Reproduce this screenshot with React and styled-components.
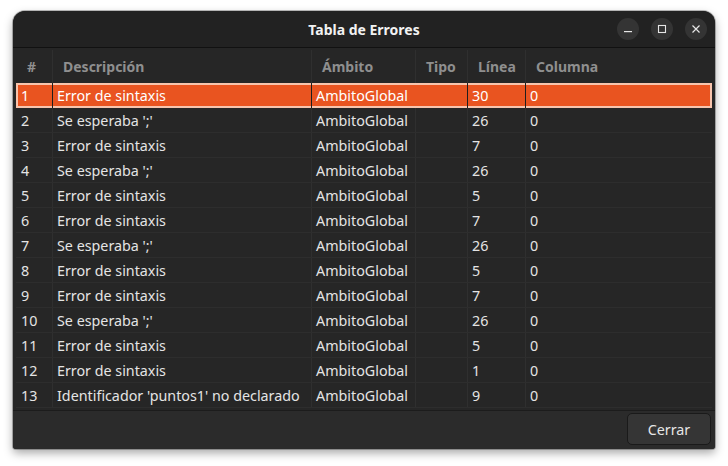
import React from "react";
import styled, { createGlobalStyle } from "styled-components";

const GlobalStyle = createGlobalStyle`
  html, body { margin: 0; padding: 0; background: #ffffff; }
  body { font-family: "Noto Sans", "Open Sans", sans-serif; }
  * { box-sizing: border-box; }
`;

const Page = styled.div`
  width: 728px;
  height: 466px;
  padding: 11px 13px 0 13px;
`;

const Window = styled.div`
  width: 702px;
  height: 438px;
  border-radius: 12px 12px 3px 3px;
  background: #2a2a2a;
  box-shadow: 0 4px 10px rgba(0, 0, 0, 0.35), 0 0 0 1px rgba(0, 0, 0, 0.25);
  display: flex;
  flex-direction: column;
  overflow: hidden;
`;

const TitleBar = styled.div`
  height: 37px;
  flex: none;
  background: #222222;
  border-bottom: 1px solid #111111;
  display: grid;
  grid-template-columns: 1fr auto 1fr;
  align-items: center;
`;

const Title = styled.div`
  grid-column: 2;
  color: #f2f2f2;
  font-weight: 700;
  font-size: 14px;
`;

const Controls = styled.div`
  grid-column: 3;
  justify-self: end;
  display: flex;
  gap: 12px;
  padding-right: 8px;
`;

const CtrlButton = styled.div`
  width: 22px;
  height: 22px;
  border-radius: 50%;
  background: #343434;
  display: flex;
  align-items: center;
  justify-content: center;
  color: #e6e6e6;
`;

const TableArea = styled.div`
  flex: 1;
  padding: 0 3px;
  background: #262626;
  border-bottom: 1px solid #1c1c1c;
`;

const cols = "36px 259px 104px 52px 58px 1fr";

const HeaderRow = styled.div`
  display: grid;
  grid-template-columns: ${cols};
  height: 35px;
  padding-top: 2px;
`;

const HeadCell = styled.div`
  display: flex;
  align-items: center;
  padding-left: ${(p) => (p.$first ? "11px" : "10px")};
  color: #8f8f8f;
  font-weight: 700;
  font-size: 14px;
  border-left: ${(p) => (p.$first ? "none" : "1px solid #2f2f2f")};
`;

const Row = styled.div`
  display: grid;
  grid-template-columns: ${cols};
  height: 25px;
  background: ${(p) => (p.$selected ? "#e95420" : "transparent")};
  box-shadow: ${(p) => (p.$selected ? "inset 0 0 0 2px #f7c4ad" : "none")};
  border-bottom: ${(p) => (p.$selected ? "none" : "1px solid #2d2d2d")};
  color: ${(p) => (p.$selected ? "#ffffff" : "#e4e4e4")};
`;

const Cell = styled.div`
  display: flex;
  align-items: center;
  padding-left: ${(p) => (p.$first ? "5px" : "4px")};
  font-size: 14.3px;
  white-space: nowrap;
  overflow: hidden;
  border-left: ${(p) =>
    p.$first
      ? "none"
      : p.$noLine
      ? "1px solid transparent"
      : p.$selected
      ? "1px solid #1e1e1e"
      : "1px solid #2f2f2f"};
`;

const Footer = styled.div`
  height: 38px;
  flex: none;
  background: #2b2b2b;
  display: flex;
  justify-content: flex-end;
  padding: 2px 4px 0 0;
`;

const Button = styled.button`
  width: 84px;
  height: 32px;
  border-radius: 5px;
  border: 1px solid #1a1a1a;
  background: #353535;
  color: #e6e6e6;
  font-family: "Noto Sans", "Open Sans", sans-serif;
  font-size: 14.3px;
`;

const errors = [
  ["1", "Error de sintaxis", "AmbitoGlobal", "", "30", "0"],
  ["2", "Se esperaba ';'", "AmbitoGlobal", "", "26", "0"],
  ["3", "Error de sintaxis", "AmbitoGlobal", "", "7", "0"],
  ["4", "Se esperaba ';'", "AmbitoGlobal", "", "26", "0"],
  ["5", "Error de sintaxis", "AmbitoGlobal", "", "5", "0"],
  ["6", "Error de sintaxis", "AmbitoGlobal", "", "7", "0"],
  ["7", "Se esperaba ';'", "AmbitoGlobal", "", "26", "0"],
  ["8", "Error de sintaxis", "AmbitoGlobal", "", "5", "0"],
  ["9", "Error de sintaxis", "AmbitoGlobal", "", "7", "0"],
  ["10", "Se esperaba ';'", "AmbitoGlobal", "", "26", "0"],
  ["11", "Error de sintaxis", "AmbitoGlobal", "", "5", "0"],
  ["12", "Error de sintaxis", "AmbitoGlobal", "", "1", "0"],
  ["13", "Identificador 'puntos1' no declarado", "AmbitoGlobal", "", "9", "0"],
];

const headers = ["#", "Descripción", "Ámbito", "Tipo", "Línea", "Columna"];

export default function App() {
  return (
    <>
      <GlobalStyle />
      <Page>
        <Window>
          <TitleBar>
            <Title>Tabla de Errores</Title>
            <Controls>
              <CtrlButton>
                <svg width="10" height="10" viewBox="0 0 10 10">
                  <rect x="1" y="7" width="8" height="1.2" fill="currentColor" />
                </svg>
              </CtrlButton>
              <CtrlButton>
                <svg width="10" height="10" viewBox="0 0 10 10">
                  <rect x="1.5" y="1.5" width="7" height="7" fill="none" stroke="currentColor" strokeWidth="1.1" />
                </svg>
              </CtrlButton>
              <CtrlButton>
                <svg width="10" height="10" viewBox="0 0 10 10">
                  <path d="M1.5 1.5 L8.5 8.5 M8.5 1.5 L1.5 8.5" stroke="currentColor" strokeWidth="1.2" />
                </svg>
              </CtrlButton>
            </Controls>
          </TitleBar>
          <TableArea>
            <HeaderRow>
              {headers.map((h, i) => (
                <HeadCell key={h} $first={i === 0}>
                  {h}
                </HeadCell>
              ))}
            </HeaderRow>
            {errors.map((r, ri) => {
              const sel = ri === 0;
              return (
                <Row key={ri} $selected={sel}>
                  {r.map((c, ci) => (
                    <Cell
                      key={ci}
                      $first={ci === 0}
                      $selected={sel}
                      $noLine={sel && ci === 3}
                    >
                      {c}
                    </Cell>
                  ))}
                </Row>
              );
            })}
          </TableArea>
          <Footer>
            <Button>Cerrar</Button>
          </Footer>
        </Window>
      </Page>
    </>
  );
}
